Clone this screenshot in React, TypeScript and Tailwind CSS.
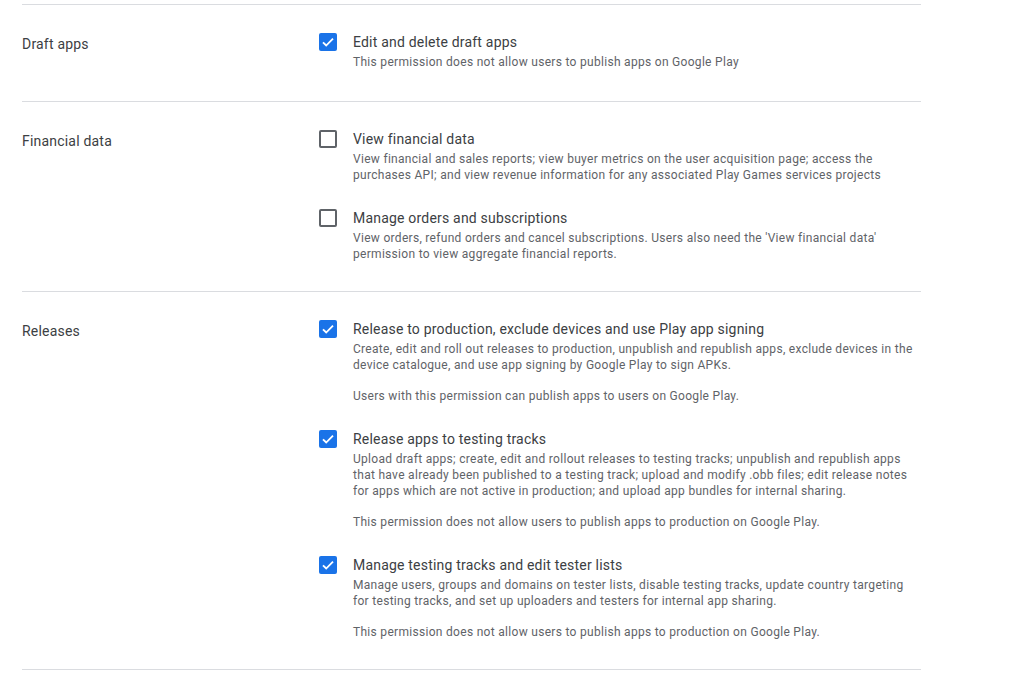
import type { ReactNode } from 'react';

type Permission = {
  title: string;
  description: string;
  note?: string;
  checked: boolean;
};

type Section = {
  label: string;
  items: Permission[];
};

const sections: Section[] = [
  {
    label: 'Draft apps',
    items: [
      {
        title: 'Edit and delete draft apps',
        description: 'This permission does not allow users to publish apps on Google Play',
        checked: true,
      },
    ],
  },
  {
    label: 'Financial data',
    items: [
      {
        title: 'View financial data',
        description:
          'View financial and sales reports; view buyer metrics on the user acquisition page; access the purchases API; and view revenue information for any associated Play Games services projects',
        checked: false,
      },
      {
        title: 'Manage orders and subscriptions',
        description:
          "View orders, refund orders and cancel subscriptions. Users also need the 'View financial data' permission to view aggregate financial reports.",
        checked: false,
      },
    ],
  },
  {
    label: 'Releases',
    items: [
      {
        title: 'Release to production, exclude devices and use Play app signing',
        description:
          'Create, edit and roll out releases to production, unpublish and republish apps, exclude devices in the device catalogue, and use app signing by Google Play to sign APKs.',
        note: 'Users with this permission can publish apps to users on Google Play.',
        checked: true,
      },
      {
        title: 'Release apps to testing tracks',
        description:
          'Upload draft apps; create, edit and rollout releases to testing tracks; unpublish and republish apps that have already been published to a testing track; upload and modify .obb files; edit release notes for apps which are not active in production; and upload app bundles for internal sharing.',
        note: 'This permission does not allow users to publish apps to production on Google Play.',
        checked: true,
      },
      {
        title: 'Manage testing tracks and edit tester lists',
        description:
          'Manage users, groups and domains on tester lists, disable testing tracks, update country targeting for testing tracks, and set up uploaders and testers for internal app sharing.',
        note: 'This permission does not allow users to publish apps to production on Google Play.',
        checked: true,
      },
    ],
  },
];

function Checkbox({ checked }: { checked: boolean }) {
  if (checked) {
    return (
      <span className="flex h-[18px] w-[18px] shrink-0 items-center justify-center rounded-[2px] bg-[#1a73e8]">
        <svg width="16" height="16" viewBox="0 0 24 24" fill="none">
          <path d="M4.5 12.5l4.8 4.8L19.5 7" stroke="white" strokeWidth="2.8" />
        </svg>
      </span>
    );
  }
  return <span className="block h-[18px] w-[18px] shrink-0 rounded-[2px] border-2 border-[#5f6368] bg-white" />;
}

function PermissionRow({ item }: { item: Permission }) {
  return (
    <div className="flex">
      <div className="w-[18px] shrink-0 pt-[2px]">
        <Checkbox checked={item.checked} />
      </div>
      <div className="ml-4 w-[568px]">
        <div className="text-[14px] leading-[22px] tracking-[0.2px] text-[#3c4043]">{item.title}</div>
        <p className="mt-[1px] text-[12px] leading-[16px] tracking-[0.3px] text-[#5f6368]">{item.description}</p>
        {item.note && (
          <p className="mt-[15px] text-[12px] leading-[16px] tracking-[0.3px] text-[#5f6368]">{item.note}</p>
        )}
      </div>
    </div>
  );
}

function SectionRow({ section, extraBottom }: { section: Section; extraBottom?: boolean }): ReactNode {
  return (
    <div className={`flex border-b border-[#dadce0] pt-[26px] ${extraBottom ? 'pb-[31px]' : 'pb-[29px]'}`}>
      <div className="w-[297px] shrink-0 pt-[2px] text-[14px] leading-[22px] tracking-[0.2px] text-[#3c4043]">
        {section.label}
      </div>
      <div className="flex flex-col gap-[24px]">
        {section.items.map((item) => (
          <PermissionRow key={item.title} item={item} />
        ))}
      </div>
    </div>
  );
}

export default function App() {
  return (
    <div className="h-[676px] w-[1014px] overflow-hidden bg-white font-['Roboto',_'Liberation_Sans',_sans-serif]">
      <div className="ml-[22px] w-[899px] pt-[4px]">
        <div className="border-t border-[#dadce0]">
          {sections.map((s, i) => (
            <SectionRow key={s.label} section={s} extraBottom={i === 0} />
          ))}
        </div>
      </div>
    </div>
  );
}
